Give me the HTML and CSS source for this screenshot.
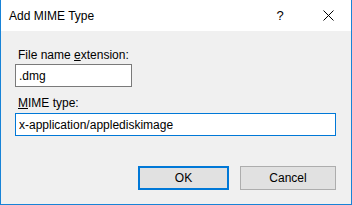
FILE: index.html
```html
<!DOCTYPE html>
<html lang="en">
<head>
    <meta charset="UTF-8">
    <title>Add MIME Type</title>
    <link rel="stylesheet" href="styles.css">
</head>
<body>
    <div class="window">
        <div class="titlebar">
            <span class="title">Add MIME Type</span>
            <span class="title-btn help">?</span>
            <span class="title-btn close">
                <svg width="11" height="11" viewBox="0 0 11 11">
                    <path d="M0.5 0.5 L10.5 10.5 M10.5 0.5 L0.5 10.5" stroke="#000" stroke-width="1" fill="none"/>
                </svg>
            </span>
        </div>
        <div class="content">
            <label class="field-label" for="ext">File name <u>e</u>xtension:</label>
            <input class="field short" id="ext" type="text" value=".dmg">
            <label class="field-label second" for="mime"><u>M</u>IME type:</label>
            <input class="field long focused" id="mime" type="text" value="x-application/applediskimage">
            <div class="buttons">
                <button class="btn default">OK</button>
                <button class="btn cancel">Cancel</button>
            </div>
        </div>
    </div>
</body>
</html>
```

FILE: styles.css
```css
body {
    margin: 0;
    font-family: "Liberation Sans", Arial, sans-serif;
    font-size: 12px;
    color: #000;
}

.window {
    width: 352px;
    height: 205px;
    box-sizing: border-box;
    border: 1px solid #1883d7;
    border-top: none;
    background: #f0f0f0;
    display: flex;
    flex-direction: column;
}

.titlebar {
    height: 31px;
    background: #fff;
    display: flex;
    align-items: center;
    padding-left: 8px;
}

.title {
    flex: 1;
    font-size: 12px;
}

.title-btn {
    width: 46px;
    display: flex;
    justify-content: center;
    align-items: center;
}

.help {
    font-size: 13px;
    padding-right: 4px;
    box-sizing: border-box;
}

.content {
    padding: 16px 14px 0 14px;
    display: flex;
    flex-direction: column;
    align-items: flex-start;
}

.field-label {
    display: block;
    line-height: 16px;
    padding-left: 3px;
    margin-bottom: 1px;
}

.field-label.second {
    margin-top: 8px;
    margin-bottom: 2px;
}

.field {
    height: 23px;
    box-sizing: border-box;
    border: 1px solid #7a7a7a;
    background: #fff;
    padding: 0 3px;
    margin: 0;
    font-family: inherit;
    font-size: 12px;
    color: #000;
    outline: none;
}

.short {
    width: 117px;
}

.long {
    width: 321px;
}

.focused {
    border-color: #0078d7;
}

.buttons {
    align-self: stretch;
    display: flex;
    justify-content: flex-end;
    gap: 11px;
    margin-top: 30px;
    padding-right: 1px;
}

.btn {
    height: 24px;
    box-sizing: border-box;
    background: #e1e1e1;
    border: 1px solid #adadad;
    font-family: inherit;
    font-size: 12px;
    color: #000;
    padding: 0;
    margin: 0;
}

.default {
    width: 91px;
    border: 2px solid #0078d7;
}

.cancel {
    width: 96px;
}
```
